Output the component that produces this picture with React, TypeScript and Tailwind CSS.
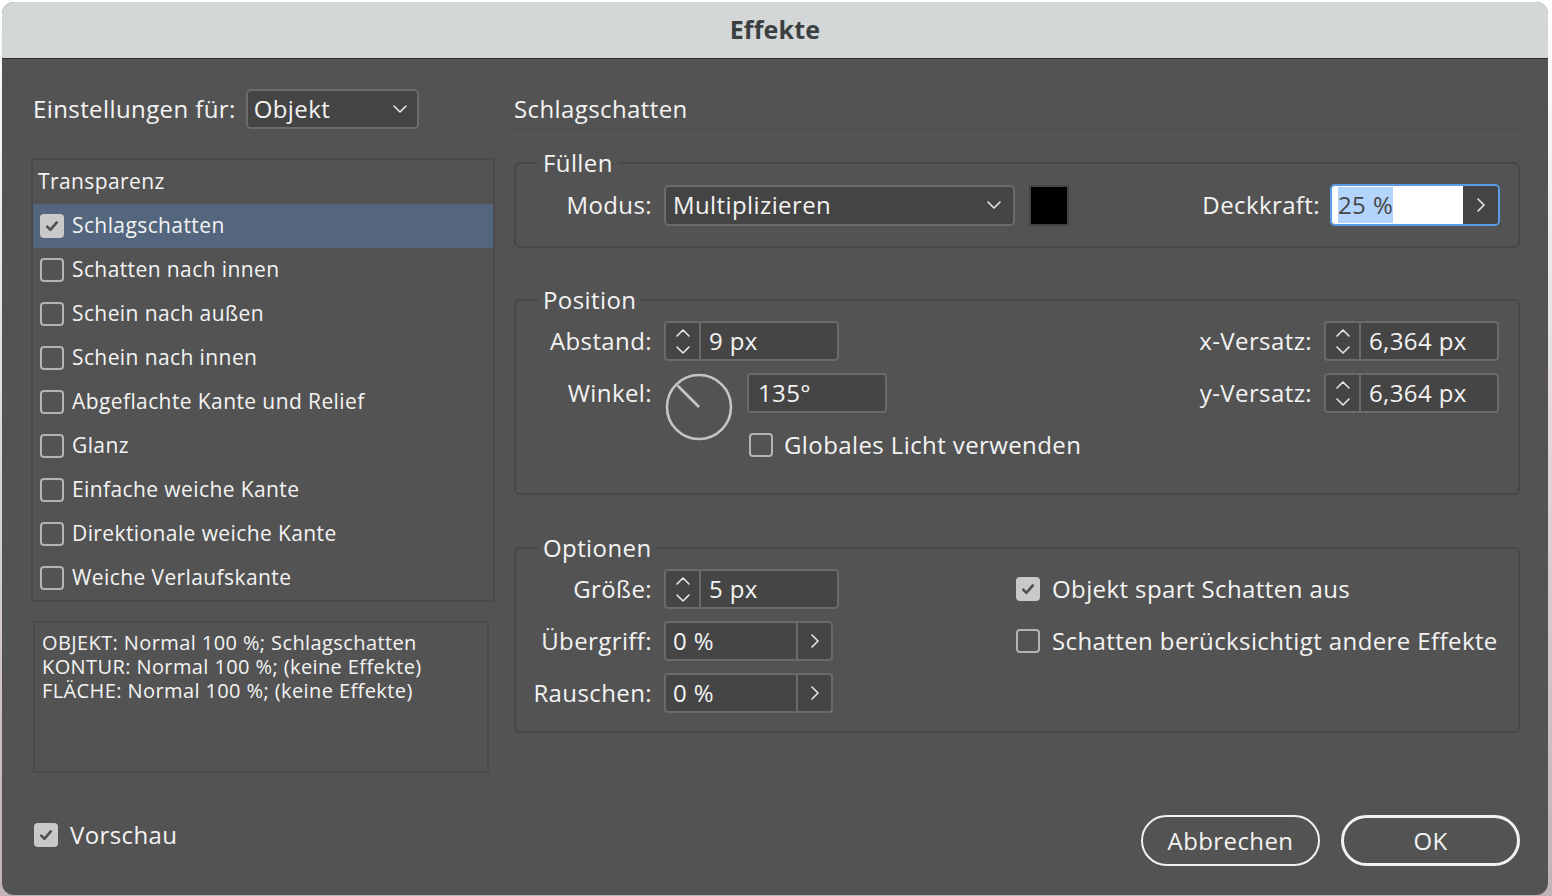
import React from "react";

const Chevron = ({ dir, className }: { dir: "up" | "down" | "right"; className?: string }) => {
  const d =
    dir === "up" ? "M1 7 L7 1 L13 7" : dir === "down" ? "M1 1 L7 7 L13 1" : "M1 1 L7 7 L1 13";
  const w = dir === "right" ? 8 : 14;
  const h = dir === "right" ? 14 : 8;
  return (
    <svg width={w} height={h} viewBox={`0 0 ${w} ${h}`} className={className}>
      <path d={d} fill="none" stroke="#e6e6e6" strokeWidth="1.6" strokeLinecap="round" strokeLinejoin="round" />
    </svg>
  );
};

const Check = ({ checked }: { checked?: boolean }) =>
  checked ? (
    <span className="flex h-[24px] w-[24px] shrink-0 items-center justify-center rounded-[4px] bg-[#c9c9c9]">
      <svg width="16" height="16" viewBox="0 0 16 16">
        <path d="M3.2 8.6 L6.4 11.8 L12.8 4.4" fill="none" stroke="#505050" strokeWidth="2.6" strokeLinecap="round" strokeLinejoin="round" />
      </svg>
    </span>
  ) : (
    <span className="h-[24px] w-[24px] shrink-0 rounded-[4px] border-2 border-[#b3b3b3]" />
  );

const Spinner = ({ value }: { value: string }) => (
  <div className="flex h-[40px] w-[175px] rounded-[4px] border-2 border-[#6a6a6a] bg-[#454545]">
    <div className="flex w-[35px] flex-col items-center justify-center gap-[9px] border-r-2 border-[#6a6a6a]">
      <Chevron dir="up" />
      <Chevron dir="down" />
    </div>
    <div className="flex items-center pl-[8px] text-[24px] text-[#f3f3f3]">{value}</div>
  </div>
);

const ArrowField = ({ value }: { value: string }) => (
  <div className="flex h-[40px] w-[169px] rounded-[4px] border-2 border-[#6a6a6a] bg-[#454545]">
    <div className="flex flex-1 items-center pl-[7px] text-[24px] text-[#f3f3f3]">{value}</div>
    <div className="flex w-[35px] items-center justify-center border-l-2 border-[#6a6a6a]">
      <Chevron dir="right" />
    </div>
  </div>
);

const Label = ({ children }: { children: React.ReactNode }) => (
  <span className="w-[136px] shrink-0 text-right text-[24px] text-[#f3f3f3]">{children}</span>
);

const effects = [
  { name: "Schlagschatten", checked: true },
  { name: "Schatten nach innen" },
  { name: "Schein nach außen" },
  { name: "Schein nach innen" },
  { name: "Abgeflachte Kante und Relief" },
  { name: "Glanz" },
  { name: "Einfache weiche Kante" },
  { name: "Direktionale weiche Kante" },
  { name: "Weiche Verlaufskante" },
];

export default function App() {
  return (
    <div className="h-[896px] w-[1552px] overflow-hidden bg-linear-to-b from-white to-[#bfb2b8] pt-[2px] font-['Open_Sans',sans-serif] font-medium tracking-[0.4px] text-[#f3f3f3]">
      <div className="mx-[2px] flex h-[893px] w-[1546px] flex-col overflow-hidden rounded-[12px] bg-[#535353]">
        {/* title bar */}
        <div className="flex h-[57px] shrink-0 items-center justify-center border-b border-[#2c2c2c] bg-[#d3d7d8]">
          <span className="text-[25px] font-bold tracking-[0.2px] text-[#3c3f40]">Effekte</span>
        </div>

        <div className="flex flex-1 gap-[19px] pb-[29px] pl-[29px] pr-[28px] pt-[30px]">
          {/* left column */}
          <div className="flex w-[464px] shrink-0 flex-col">
            <div className="flex h-[40px] items-center gap-[10px] pl-[2px]">
              <span className="text-[24px]">Einstellungen für:</span>
              <div className="flex h-[40px] w-[173px] items-center justify-between rounded-[5px] border-2 border-[#6b6b6b] bg-[#444444] pl-[6px] pr-[10px]">
                <span className="text-[24px]">Objekt</span>
                <Chevron dir="down" />
              </div>
            </div>

            <div className="mt-[29px] border-2 border-[#4a4a4a]">
              <div className="flex h-[44px] items-center pl-[5px] text-[21px]">Transparenz</div>
              {effects.map((e) => (
                <div
                  key={e.name}
                  className={`flex h-[44px] items-center gap-[8px] pl-[7px] text-[21px] ${e.checked ? "bg-[#54667e]" : ""}`}
                >
                  <Check checked={e.checked} />
                  <span>{e.name}</span>
                </div>
              ))}
            </div>

            <div className="ml-[2px] mt-[19px] h-[152px] w-[456px] border-2 border-[#4a4a4a] pl-[7px] pt-[8px] text-[20px] leading-[24px]">
              <div>OBJEKT: Normal 100 %; Schlagschatten</div>
              <div>KONTUR: Normal 100 %; (keine Effekte)</div>
              <div>FLÄCHE: Normal 100 %; (keine Effekte)</div>
            </div>

            <div className="mb-[19px] mt-auto flex h-[24px] items-center gap-[12px] pl-[3px]">
              <Check checked />
              <span className="text-[24px] leading-[24px]">Vorschau</span>
            </div>
          </div>

          {/* right column */}
          <div className="flex flex-1 flex-col">
            <div className="flex h-[41px] items-center border-b border-[#4a4a4a] text-[24px]">Schlagschatten</div>

            {/* Füllen */}
            <fieldset className="mt-[18px] rounded-[6px] border-2 border-[#474747] pb-[20px] pr-[18px]">
              <legend className="ml-[22px] px-[5px] text-[24px] leading-[30px]">Füllen</legend>
              <div className="flex items-center pt-[6px]">
                <Label>Modus:</Label>
                <div className="ml-[12px] flex h-[41px] w-[351px] items-center justify-between rounded-[5px] border-2 border-[#6b6b6b] bg-[#444444] pl-[7px] pr-[12px]">
                  <span className="text-[24px]">Multiplizieren</span>
                  <Chevron dir="down" />
                </div>
                <div className="ml-[14px] h-[41px] w-[40px] border-2 border-[#444444] bg-black" />
                <span className="ml-auto text-[24px]">Deckkraft:</span>
                <div className="ml-[10px] flex h-[42px] w-[170px] overflow-hidden rounded-[5px] border-2 border-[#5b9be8]">
                  <div className="flex flex-1 items-center bg-white pl-[6px]">
                    <span className="bg-[#b3d4fc] text-[24px] leading-[36px] text-[#474747]">25 %</span>
                  </div>
                  <div className="flex w-[35px] items-center justify-center bg-[#454545]">
                    <Chevron dir="right" />
                  </div>
                </div>
              </div>
            </fieldset>

            {/* Position */}
            <fieldset className="mt-[37px] rounded-[6px] border-2 border-[#474747] pb-[36px] pr-[19px]">
              <legend className="ml-[22px] px-[5px] text-[24px] leading-[30px]">Position</legend>
              <div className="flex justify-between pt-[6px]">
                <div className="flex flex-col gap-[12px]">
                  <div className="flex items-center">
                    <Label>Abstand:</Label>
                    <div className="ml-[12px]">
                      <Spinner value="9 px" />
                    </div>
                  </div>
                  <div className="flex items-start">
                    <div className="flex h-[40px] items-center">
                      <Label>Winkel:</Label>
                    </div>
                    <svg width="68" height="68" viewBox="0 0 68 68" className="ml-[13px]">
                      <circle cx="34" cy="34" r="32" fill="none" stroke="#c4c4c4" strokeWidth="2.6" />
                      <line x1="34" y1="34" x2="12.5" y2="12.5" stroke="#c4c4c4" strokeWidth="2.6" />
                    </svg>
                    <div className="ml-[14px] flex flex-col">
                      <div className="flex h-[40px] w-[140px] items-center rounded-[4px] border-2 border-[#6a6a6a] bg-[#454545] pl-[9px] text-[24px]">
                        135°
                      </div>
                      <div className="mt-[20px] flex h-[24px] items-center gap-[11px] pl-[2px]">
                        <Check />
                        <span className="whitespace-nowrap text-[24px] leading-[24px]">Globales Licht verwenden</span>
                      </div>
                    </div>
                  </div>
                </div>
                <div className="flex flex-col gap-[12px]">
                  <div className="flex items-center justify-end gap-[12px]">
                    <span className="text-[24px]">x-Versatz:</span>
                    <Spinner value="6,364 px" />
                  </div>
                  <div className="flex items-center justify-end gap-[12px]">
                    <span className="text-[24px]">y-Versatz:</span>
                    <Spinner value="6,364 px" />
                  </div>
                </div>
              </div>
            </fieldset>

            {/* Optionen */}
            <fieldset className="mt-[38px] rounded-[6px] border-2 border-[#474747] pb-[18px] pr-[19px]">
              <legend className="ml-[22px] px-[5px] text-[24px] leading-[30px]">Optionen</legend>
              <div className="flex pt-[6px]">
                <div className="flex flex-col gap-[12px]">
                  <div className="flex items-center">
                    <Label>Größe:</Label>
                    <div className="ml-[12px]">
                      <Spinner value="5 px" />
                    </div>
                  </div>
                  <div className="flex items-center">
                    <Label>Übergriff:</Label>
                    <div className="ml-[12px]">
                      <ArrowField value="0 %" />
                    </div>
                  </div>
                  <div className="flex items-center">
                    <Label>Rauschen:</Label>
                    <div className="ml-[12px]">
                      <ArrowField value="0 %" />
                    </div>
                  </div>
                </div>
                <div className="ml-[177px] flex flex-col gap-[28px] pt-[8px]">
                  <div className="flex h-[24px] items-center gap-[12px]">
                    <Check checked />
                    <span className="whitespace-nowrap text-[24px] leading-[24px]">Objekt spart Schatten aus</span>
                  </div>
                  <div className="flex h-[24px] items-center gap-[12px]">
                    <Check />
                    <span className="whitespace-nowrap text-[24px] leading-[24px]">Schatten berücksichtigt andere Effekte</span>
                  </div>
                </div>
              </div>
            </fieldset>

            <div className="mt-auto flex justify-end gap-[21px]">
              <button className="flex h-[51px] w-[179px] items-center justify-center rounded-full border-2 border-[#f2f2f2] text-[24px] text-[#f3f3f3]">
                Abbrechen
              </button>
              <button className="flex h-[51px] w-[179px] items-center justify-center rounded-full border-[3px] border-[#f2f2f2] text-[24px] text-[#f3f3f3]">
                OK
              </button>
            </div>
          </div>
        </div>
      </div>
    </div>
  );
}
